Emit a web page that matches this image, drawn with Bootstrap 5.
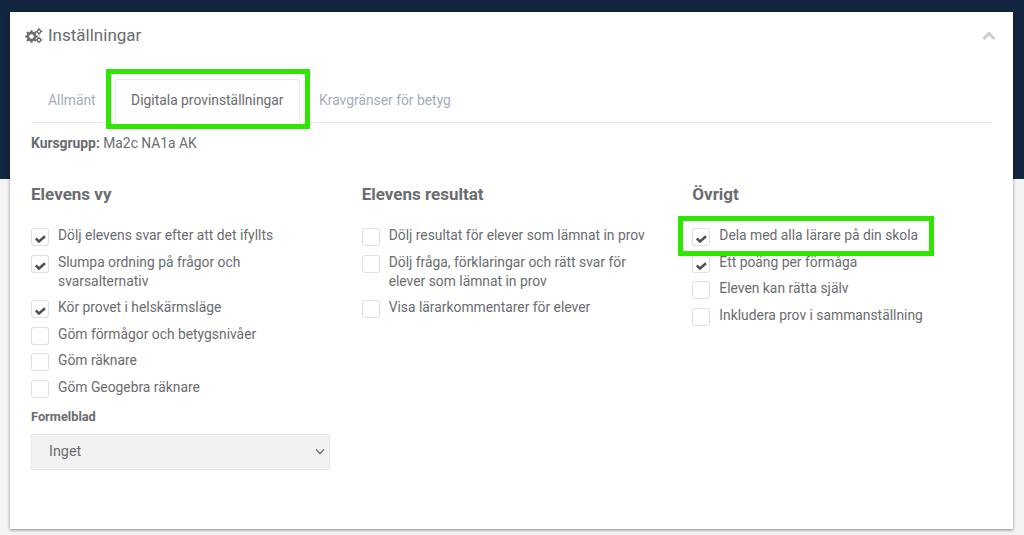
<!DOCTYPE html>
<html lang="sv">
<head>
<meta charset="utf-8">
<title>Inställningar</title>
<link href="https://cdn.jsdelivr.net/npm/bootstrap@5.3.0/dist/css/bootstrap.min.css" rel="stylesheet">
<style>
html,body{height:535px;overflow:hidden}
body{font-family:Roboto,"Liberation Sans",sans-serif;font-size:13.85px;color:#6a6c6f;background:linear-gradient(#12263f 179px,#f4f4f4 179px);padding:12px 11px 6px 10px}
.panel-box{height:517px;border:0;border-radius:0;background:#fff;box-shadow:0 1px 3px rgba(0,0,0,.45);color:inherit}
.panel-head{padding:13px 17px 0 15px;height:48px}
.panel-title{font-size:17px;line-height:20px;font-weight:400;margin:0;color:#6a6c6f}
.panel-title svg{vertical-align:-2px;margin-right:5px}
.panel-main{padding:19px 21px 0 21px}
.tab-row{border-bottom:1px solid #e5e7ea;height:44px;padding-left:0}
.tab-row .nav-link{color:#a3adb8;font-size:13.85px;line-height:20px;padding:10px 16px;border:1px solid transparent;border-radius:4px 4px 0 0;margin:0}
.tab-row .nav-link.active{color:#6a6c6f;border-color:#e5e7ea #e5e7ea #fff;background:#fff;height:44px;padding:10px 15.5px}
.tab-row .nav-item{position:relative;margin-right:2px}
.mark-box{position:absolute;border:5px solid #2ee600;pointer-events:none;z-index:3}
.mark-tab{left:-9px;top:-10px;width:204px;height:60px}
.course-line{margin:10px 0 0;line-height:20px}
.col-title{font-size:17px;font-weight:700;line-height:20px;margin:0 0 22px;color:#6a6c6f}
.settings-row{margin-top:31px;--bs-gutter-x:32px;margin-left:-16px;margin-right:-15px}
.opt{position:relative;display:flex;gap:9px;margin:0 0 7.6px;line-height:19px;padding:0;min-height:19px}
.opt .form-check-input{flex:none;width:18px;height:18px;margin:2px 0 -1px;border:1px solid #dcdfe3;border-radius:3px;background-color:#fff;float:none}
.opt .form-check-input:checked{background-color:#fff;border-color:#dcdfe3;background-image:url("data:image/svg+xml,%3csvg xmlns='http://www.w3.org/2000/svg' viewBox='0 0 18 18'%3e%3cpath fill='none' stroke='%23505050' stroke-width='2.500' d='M4.800 10.500l3.200 3 6-5.200'/%3e%3c/svg%3e");background-size:18px}
.opt label{margin:0}
.mark-opt{left:-14px;top:-10px;width:256px;height:40px}
.fld-label{font-size:12.8px;font-weight:700;line-height:16px;margin:11.6px 0 9px;display:block}
.fld-select{height:36px;border-radius:0;border:1px solid #e8e8e8;background-color:#f2f2f2;color:#6a6c6f;font-size:14.4px;padding:0 17px;background-image:url("data:image/svg+xml,%3csvg xmlns='http://www.w3.org/2000/svg' viewBox='0 0 10 7'%3e%3cpath fill='none' stroke='%23707070' stroke-width='1.500' d='M1 1.500l4 4 4-4'/%3e%3c/svg%3e");background-size:10px 7px;background-position:right 4px center}
</style>
</head>
<body>
<div class="card panel-box">
  <div class="panel-head d-flex justify-content-between align-items-start">
    <h5 class="panel-title"><svg width="18" height="15" viewBox="0 0 18 15" aria-hidden="true"><g fill="#6a6c6f"><circle cx="6.500" cy="8.500" r="4.800"/><g stroke="#6a6c6f" stroke-width="2.200"><path d="M6.500 2.200v12.600M.2 8.500h12.600M2 4l9 9M11 4l-9 9"/></g><circle cx="14" cy="3.500" r="2.400"/><circle cx="14" cy="12" r="2.400"/><g stroke="#6a6c6f" stroke-width="1.200"><path d="M14 0v7M10.500 3.500h7M14 8.500v7M10.500 12h7"/></g></g><circle cx="6.500" cy="8.500" r="2.300" fill="#fff"/><circle cx="14" cy="3.500" r="1.100" fill="#fff"/><circle cx="14" cy="12" r="1.100" fill="#fff"/></svg>Inställningar</h5>
    <svg style="margin-top:6px" width="14" height="10" viewBox="0 0 14 10" aria-hidden="true"><path d="M1.500 8L7 2.500 12.500 8" fill="none" stroke="#c9ced3" stroke-width="3"/></svg>
  </div>
  <div class="panel-main">
    <ul class="nav nav-tabs tab-row">
      <li class="nav-item"><a class="nav-link" href="#">Allmänt</a></li>
      <li class="nav-item"><a class="nav-link active" href="#">Digitala provinställningar</a><span class="mark-box mark-tab"></span></li>
      <li class="nav-item"><a class="nav-link" href="#">Kravgränser för betyg</a></li>
    </ul>
    <p class="course-line"><strong class="fw-bold">Kursgrupp:</strong> Ma2c NA1a AK</p>
    <div class="row settings-row">
      <div class="col-4">
        <h5 class="col-title">Elevens vy</h5>
        <div class="opt"><input class="form-check-input" type="checkbox" id="a1" checked><label for="a1">Dölj elevens svar efter att det ifyllts</label></div>
        <div class="opt"><input class="form-check-input" type="checkbox" id="a2" checked><label for="a2">Slumpa ordning på frågor och svarsalternativ</label></div>
        <div class="opt"><input class="form-check-input" type="checkbox" id="a3" checked><label for="a3">Kör provet i helskärmsläge</label></div>
        <div class="opt"><input class="form-check-input" type="checkbox" id="a4"><label for="a4">Göm förmågor och betygsnivåer</label></div>
        <div class="opt"><input class="form-check-input" type="checkbox" id="a5"><label for="a5">Göm räknare</label></div>
        <div class="opt"><input class="form-check-input" type="checkbox" id="a6"><label for="a6">Göm Geogebra räknare</label></div>
        <label class="fld-label" for="f1">Formelblad</label>
        <select class="form-select fld-select" id="f1"><option>Inget</option></select>
      </div>
      <div class="col-4">
        <h5 class="col-title">Elevens resultat</h5>
        <div class="opt"><input class="form-check-input" type="checkbox" id="b1"><label for="b1">Dölj resultat för elever som lämnat in prov</label></div>
        <div class="opt"><input class="form-check-input" type="checkbox" id="b2"><label for="b2">Dölj fråga, förklaringar och rätt svar för elever som lämnat in prov</label></div>
        <div class="opt"><input class="form-check-input" type="checkbox" id="b3"><label for="b3">Visa lärarkommentarer för elever</label></div>
      </div>
      <div class="col-4">
        <h5 class="col-title">Övrigt</h5>
        <div class="opt"><input class="form-check-input" type="checkbox" id="c1" checked><label for="c1">Dela med alla lärare på din skola</label><span class="mark-box mark-opt"></span></div>
        <div class="opt"><input class="form-check-input" type="checkbox" id="c2" checked><label for="c2">Ett poäng per förmåga</label></div>
        <div class="opt"><input class="form-check-input" type="checkbox" id="c3"><label for="c3">Eleven kan rätta själv</label></div>
        <div class="opt"><input class="form-check-input" type="checkbox" id="c4"><label for="c4">Inkludera prov i sammanställning</label></div>
      </div>
    </div>
  </div>
</div>
<script src="https://cdn.jsdelivr.net/npm/bootstrap@5.3.0/dist/js/bootstrap.bundle.min.js"></script>
</body>
</html>
